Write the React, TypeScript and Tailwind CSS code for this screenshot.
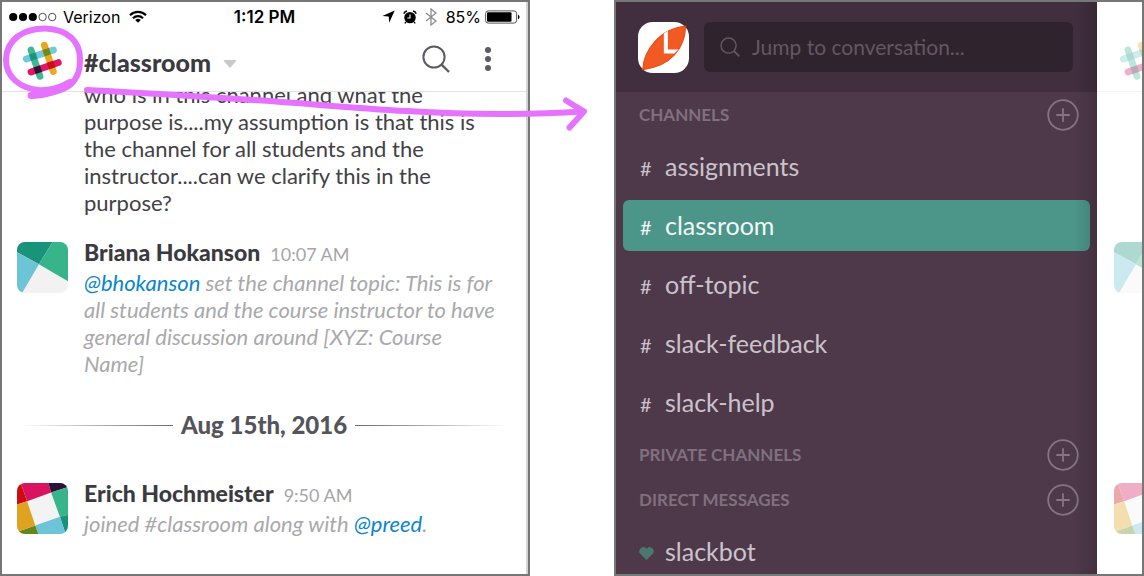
import type { ReactNode } from "react";

function HashLogo({ className = "" }: { className?: string }) {
  return (
    <svg viewBox="22 41 41 40" className={`h-[40px] w-[41px] shrink-0 ${className}`} aria-hidden="true">
      <g strokeWidth="6.8" strokeLinecap="round" fill="none">
        <path d="M26.3 59 53.4 50" stroke="#70cadb" />
        <path d="M44.3 45.2 53.3 71.6" stroke="#e9a820" />
        <path d="M31 50 40 76.3" stroke="#3eb991" />
        <path d="M31 72 58.3 62.6" stroke="#e01563" />
      </g>
      <g>
        <rect x="-3.4" y="-3.4" width="6.8" height="6.8" fill="#1f937f" transform="translate(33.2 56.7) rotate(-18.6)" />
        <rect x="-3.4" y="-3.4" width="6.8" height="6.8" fill="#6e8a1c" transform="translate(46.7 52.2) rotate(-18.6)" />
        <rect x="-3.4" y="-3.4" width="6.8" height="6.8" fill="#2c1437" transform="translate(37.8 69.7) rotate(-18.6)" />
        <rect x="-3.4" y="-3.4" width="6.8" height="6.8" fill="#cb0f18" transform="translate(51.2 65) rotate(-18.6)" />
      </g>
    </svg>
  );
}

function KiteAvatar() {
  return (
    <svg viewBox="0 0 151 151" className="size-[51px] shrink-0 rounded-lg" aria-hidden="true">
      <rect width="151" height="151" fill="#f2f2f2" />
      <path d="M0 0H105L65 66 0 30Z" fill="#1a937b" />
      <path d="M105 0H151V116L65 66Z" fill="#38b48b" />
      <path d="M0 30 65 66 15 151H0Z" fill="#6cc4d6" />
    </svg>
  );
}

function PinwheelAvatar() {
  return (
    <svg viewBox="0 0 151 151" className="size-[51px] shrink-0 rounded-lg" aria-hidden="true">
      <rect width="151" height="151" fill="#f3f3f3" />
      <path d="M0 0H11L30 54 0 64Z" fill="#cb0d12" />
      <path d="M11 0H93L101 28 30 54Z" fill="#d9135f" />
      <path d="M93 0H151V12L101 28Z" fill="#2d1138" />
      <path d="M101 28 151 12V94L127 100Z" fill="#38b48b" />
      <path d="M127 100 151 94V151H144Z" fill="#17937a" />
      <path d="M54 126 127 100 144 151H63Z" fill="#6cc4d6" />
      <path d="M0 145 54 126 63 151H0Z" fill="#64851a" />
      <path d="M0 64 30 54 54 126 0 145Z" fill="#e0a221" />
    </svg>
  );
}

function TeamIcon() {
  return (
    <svg viewBox="0 0 152 152" className="size-[51px] shrink-0" role="img" aria-label="Team">
      <rect width="152" height="152" rx="44" fill="#fff" />
      <path d="M14 142C16 88 62 20 142 13 140 78 98 132 14 142Z" fill="#f15a22" stroke="#ee4a12" strokeWidth="3" />
      <path d="M77 34 89 27V82H121L108 94H77Z" fill="#fff" />
    </svg>
  );
}

function SearchIcon({ className }: { className: string }) {
  return (
    <svg viewBox="0 0 28 28" className={className} fill="none" stroke="currentColor" strokeWidth="2" aria-hidden="true">
      <circle cx="12" cy="12" r="10.6" />
      <path d="M19.4 19.4 27 27" strokeWidth="2.4" />
    </svg>
  );
}

function StatusBar() {
  return (
    <div className="grid h-[29px] grid-cols-[1fr_auto_1fr] items-center pl-[7px] pr-[6px] font-[Inter,sans-serif] text-[16px] leading-5 text-black">
      <div className="flex items-center gap-[6px]">
        <svg viewBox="0 0 48 10" className="h-[10px] w-[48px]" aria-hidden="true">
          <circle cx="4.200" cy="5" r="4.1" />
          <circle cx="14" cy="5" r="4.1" />
          <circle cx="23.800" cy="5" r="4.1" />
          <circle cx="33.600" cy="5" r="3.7" fill="none" stroke="#222" strokeWidth=".8" />
          <circle cx="43.200" cy="5" r="3.7" fill="none" stroke="#222" strokeWidth=".8" />
        </svg>
        <span>Verizon</span>
        <svg viewBox="0 0 18 13" className="ml-[3px] h-[13px] w-[18px]" fill="none" stroke="#000" strokeWidth="2.1" aria-hidden="true">
          <path d="M1 5.2A11.4 11.4 0 0 1 17 5.2" />
          <path d="M4 8.2A7.1 7.1 0 0 1 14 8.2" />
          <path d="M9 12.8 6.2 10A4 4 0 0 1 11.8 10Z" fill="#000" stroke="none" />
        </svg>
      </div>
      <span className="text-[17px] font-semibold">1:12 PM</span>
      <div className="flex items-center justify-end">
        <svg viewBox="0 0 13 13" className="mr-[8px] size-[13px]" aria-hidden="true">
          <path d="M12.7.4 7.2 12.8 6.7 6.5.4 6Z" />
        </svg>
        <svg viewBox="0 0 14 14" className="mr-[8px] size-[14px]" aria-hidden="true">
          <circle cx="7" cy="7.6" r="5.7" />
          <path d="M.8 3.8A4 4 0 0 1 4 1M13.2 3.8A4 4 0 0 0 10 1M3 12 1.8 13.4M11 12 12.2 13.4" fill="none" stroke="#000" strokeWidth="1.4" />
          <path d="M7 4.4V8H4.4" fill="none" stroke="#fff" strokeWidth="1.1" />
        </svg>
        <svg viewBox="0 0 12 18" className="mr-[9px] h-[18px] w-[12px]" fill="none" stroke="#8d8d8d" strokeWidth="1.3" aria-hidden="true">
          <path d="M1 5 11 13 6 17V1L11 5 1 13" />
        </svg>
        <span className="mr-[4px]">85%</span>
        <svg viewBox="0 0 35 14" className="h-[14px] w-[35px]" aria-hidden="true">
          <rect x=".6" y=".9" width="31" height="12.2" rx="2.6" fill="none" stroke="#555" strokeWidth="1" />
          <rect x="2" y="2.3" width="24.5" height="9.4" rx="1" />
          <path d="M33 4.6Q36.2 7 33 9.4Z" />
        </svg>
      </div>
    </div>
  );
}

function Message({ avatar, name, time, children }: { avatar: ReactNode; name: string; time: string; children: ReactNode }) {
  return (
    <article className="flex gap-4 pl-[15px] pr-[26px]">
      {avatar}
      <div className="min-w-0 flex-1">
        <div className="flex items-baseline gap-[10px]">
          <h2 className="text-[23px] leading-[20px] font-black text-[#3b3a40]">{name}</h2>
          <time className="text-[18px] leading-[20px] text-[#a6a6a8]">{time}</time>
        </div>
        <p className="mt-[5px] text-[22px] italic leading-[27px] text-[#a9a9ab]">{children}</p>
      </div>
    </article>
  );
}

function Mention({ children }: { children: string }) {
  return (
    <a href="#profile" className="text-[#0a86ca]">
      {children}
    </a>
  );
}

function ConversationScreen() {
  return (
    <section className="flex min-w-0 flex-1 flex-col overflow-hidden border-2 border-[#777] bg-white">
      <div className="flex min-h-0 flex-1 flex-col border-r-2 border-[#d4d4d4]">
        <StatusBar />
        <header className="flex h-[61px] shrink-0 items-center border-b border-[#e2e2e4] pl-5 pr-[34px]">
          <button type="button" aria-label="Open channel list">
            <HashLogo />
          </button>
          <button type="button" className="ml-[21px] flex items-center gap-3 pt-[2px] text-[25px] font-black leading-8 text-[#3b3a40]">
            #classroom
            <svg viewBox="0 0 14 8" className="mt-[4px] h-[8px] w-[14px]" aria-hidden="true">
              <path d="M1 .5H13L7 7.5Z" fill="#c9c9cb" stroke="#c9c9cb" strokeLinejoin="round" />
            </svg>
          </button>
          <div className="ml-auto flex items-center gap-[34px] pb-[4px]">
            <button type="button" aria-label="Search" className="text-[#5c5b61]">
              <SearchIcon className="size-[28px]" />
            </button>
            <button type="button" aria-label="More options">
              <svg viewBox="0 0 8 26" className="h-[26px] w-[8px]" fill="#5c5b61" aria-hidden="true">
                <circle cx="4" cy="4" r="3" />
                <circle cx="4" cy="13" r="3" />
                <circle cx="4" cy="22" r="3" />
              </svg>
            </button>
          </div>
        </header>
        <div className="min-h-0 flex-1 overflow-hidden">
          <p className="-mt-[11px] pl-[82px] pr-[26px] text-[22px] leading-[27px] text-[#424146]">
            who is in this channel and what the purpose is....my assumption is that this is the channel for all students and the
            instructor....can we clarify this in the purpose?
          </p>
          <div className="mt-[26px]">
            <Message avatar={<KiteAvatar />} name="Briana Hokanson" time="10:07 AM">
              <Mention>@bhokanson</Mention> set the channel topic: This is for all students and the course instructor to have general
              discussion around [XYZ: Course Name]
            </Message>
          </div>
          <div className="mt-8 mb-[42px] flex items-center gap-2 px-5">
            <span className="h-px flex-1 bg-linear-to-l from-[#6a6a6e] to-white" />
            <h3 className="text-[24px] font-black leading-8 text-[#55545a]">Aug 15th, 2016</h3>
            <span className="h-px flex-1 bg-linear-to-r from-[#6a6a6e] to-white" />
          </div>
          <Message avatar={<PinwheelAvatar />} name="Erich Hochmeister" time="9:50 AM">
            joined #classroom along with <Mention>@preed</Mention>.
          </Message>
        </div>
      </div>
    </section>
  );
}

function SectionHeading({ title }: { title: string }) {
  return (
    <div className="flex h-[45px] items-center justify-between pl-[23px] pr-[18px]">
      <h2 className="text-[17px] font-bold text-[#80707e]">{title}</h2>
      <button type="button" aria-label={`Add to ${title.toLowerCase()}`} className="text-[#857582]">
        <svg viewBox="0 0 32 32" className="mt-px size-[32px]" fill="none" stroke="currentColor" strokeWidth="1.8" aria-hidden="true">
          <circle cx="16" cy="16" r="14.8" />
          <path d="M9.3 16H22.7M16 9.3V22.7" />
        </svg>
      </button>
    </div>
  );
}

function SidebarRow({ label, active = false, icon }: { label: string; active?: boolean; icon?: ReactNode }) {
  return (
    <li>
      <a
        href={`#${label}`}
        className={
          active
            ? "flex h-[51px] items-center rounded-md bg-[#4c9689] pl-4 text-[25px] text-[#f3f7f6]"
            : "flex h-[51px] items-center pl-4 text-[25px] text-[#cbc3ca]"
        }
      >
        <span className="w-[26px] shrink-0 pt-[3px] pl-px text-[20px]">{icon ?? "#"}</span>
        {label}
      </a>
    </li>
  );
}

function HeartIcon() {
  return (
    <svg viewBox="0 0 15 13" className="-ml-px h-[13px] w-[15px]" fill="#4a7871" aria-hidden="true">
      <path d="M7.5 13 1.2 6.8A3.8 3.8 0 0 1 7.5 1.8 3.8 3.8 0 0 1 13.8 6.8Z" />
    </svg>
  );
}

const channels = ["assignments", "classroom", "off-topic", "slack-feedback", "slack-help"];

function SidebarScreen() {
  return (
    <section className="flex min-w-0 flex-1 overflow-hidden border-2 border-[#777] bg-white">
      <div className="relative min-w-0 flex-1 overflow-hidden bg-[#4e394b]">
        <header className="flex h-[90px] items-center gap-[15px] bg-[#412f3f] pl-[22px] pr-6">
          <TeamIcon />
          <label className="flex h-[50px] min-w-0 flex-1 items-center gap-3 rounded-md bg-[#2f232d] pl-4 text-[#655763]">
            <SearchIcon className="size-[20px] shrink-0" />
            <input
              type="search"
              aria-label="Jump to conversation"
              placeholder="Jump to conversation..."
              className="w-full min-w-0 bg-transparent text-[21px] outline-none placeholder:text-[#655763]"
            />
          </label>
        </header>
        <nav>
          <SectionHeading title="CHANNELS" />
          <ul className="flex flex-col gap-2 px-[7px] py-1">
            {channels.map((name) => (
              <SidebarRow key={name} label={name} active={name === "classroom"} />
            ))}
          </ul>
          <SectionHeading title="PRIVATE CHANNELS" />
          <SectionHeading title="DIRECT MESSAGES" />
          <ul className="px-[7px] py-1">
            <SidebarRow label="slackbot" icon={<HeartIcon />} />
          </ul>
        </nav>
        <div className="pointer-events-none absolute inset-y-0 right-0 w-6 bg-linear-to-l from-black/15 to-transparent" />
      </div>
      <div className="w-[45px] shrink-0 overflow-hidden" aria-hidden="true">
        <div className="opacity-35">
          <div className="h-[90px] border-b border-[#e2e2e4] pt-[39px] pl-[22px]">
            <HashLogo />
          </div>
          <div className="flex flex-col gap-[190px] pt-[150px] pl-[17px]">
            <KiteAvatar />
            <PinwheelAvatar />
          </div>
        </div>
      </div>
    </section>
  );
}

function Annotation() {
  return (
    <svg
      viewBox="0 0 600 140"
      className="pointer-events-none absolute top-0 left-0 h-[140px] w-[600px]"
      fill="none"
      stroke="#e573ff"
      strokeWidth="6"
      strokeLinecap="round"
      strokeLinejoin="round"
      aria-hidden="true"
    >
      <path d="M70 82C60 88 47 91 38 90 20 88 6 77 6 60 6 40 23 28.500 45 28.500 68 29 80 42 80 59 80 70 78 78 70 85 60 92 48 94 31 95.500" />
      <path d="M31 95.500C44 96 58 90 69 83" strokeWidth="7" />
      <path d="M87 90C150 93 200 97 270 101 350 107 420 114 500 114 530 114 560 113 583 111.500" />
      <path d="M566 100.500 584 111.500 569.500 127.500" />
    </svg>
  );
}

export default function App() {
  return (
    <main className="relative flex h-screen gap-[84px] bg-white font-[Lato,sans-serif]">
      <ConversationScreen />
      <SidebarScreen />
      <Annotation />
    </main>
  );
}
